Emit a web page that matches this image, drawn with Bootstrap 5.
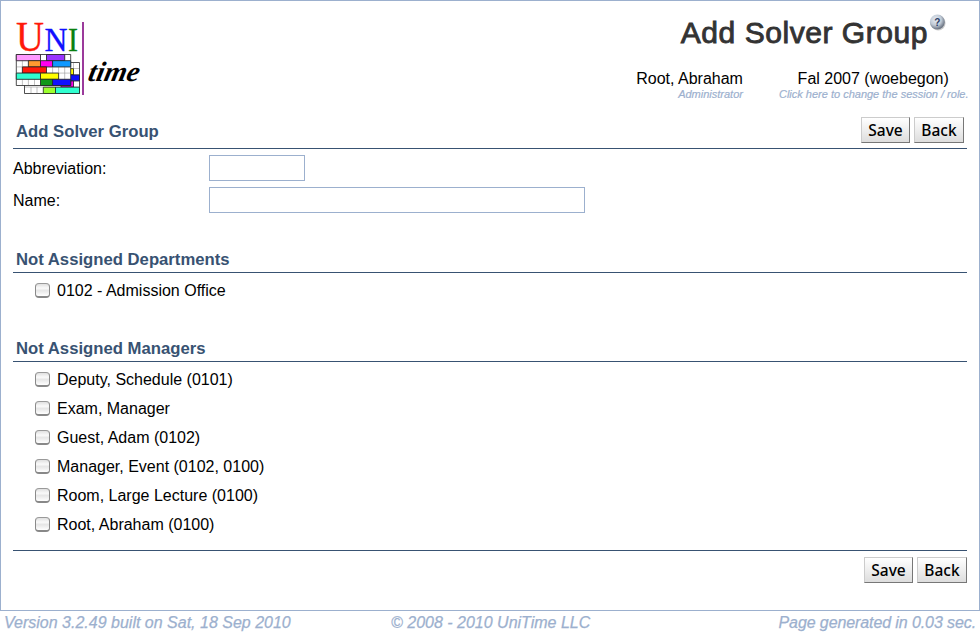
<!DOCTYPE html>
<html lang="en">
<head>
<meta charset="utf-8">
<title>Add Solver Group</title>
<link href="https://cdn.jsdelivr.net/npm/bootstrap@5.3.0/dist/css/bootstrap.min.css" rel="stylesheet">
<style>
body{font-family:"Liberation Sans",Arial,sans-serif;font-size:16px;line-height:20px;color:#000;background:#fff;height:635px;overflow:hidden}
.frame{height:611px;border:1px solid #9cb0ce;padding:0 12px}
.topbar{height:112px}
.logo{margin:11px 0 0 0;width:132px;height:88px;overflow:visible}
.page-title{font-size:30px;line-height:36px;color:#333;letter-spacing:.55px;-webkit-text-stroke:.9px #333;margin:14px 0 0}
.title-row{margin-right:21px}
.help{width:18px;height:18px;margin-top:12px}
.sub{font-size:11px;line-height:11px;font-style:italic;color:#9cb0ce;-webkit-text-stroke:.2px #9cb0ce}
.who{margin:18px -1.5px 0 0;gap:36px}
.session{padding-right:2px;margin-right:-1px}
.sec{color:#385272;font-weight:700;font-size:16.7px;line-height:20px;border-bottom:1px solid #385272;margin:0;padding-left:3px}
.sec-top{height:36px;padding-right:3px}
.sec-top .sec-name{padding-top:9px}
.btn.tool{font-family:"Noto Sans","Open Sans",sans-serif;font-size:15.5px;font-weight:500;line-height:20px;padding:2px 0 2px;height:26px;border-radius:0;color:#000;background:linear-gradient(#fff,#ddd);border:1px solid;border-color:#ccc #777 #777 #ccc;border-right-width:1.5px}
.save{width:49px}.back{width:50px}
.line{padding-top:6px}
.lab{width:196px;padding-top:2px}
.box.form-control{height:26px;border:1px solid #9cb0ce;border-radius:0;padding:0}
.short{width:96px}.long{width:376px}
.group-a{margin-top:37px}
.group-b{margin-top:34px;padding-bottom:11px;border-bottom:1px solid #385272}
.group-a .sec,.group-b .sec{margin-bottom:3px;padding-bottom:2px}
.actions{padding-top:6px}
.opt{height:29px;padding-left:22px;gap:7px}
.opt .form-check-input{width:15px;height:15px;margin:0;border:1px solid #8a8a8a;border-top-color:#999;border-bottom:2px solid #888;border-radius:4px;background:linear-gradient(#e0e0e0,#fafafa 35%,#e6e6e6 55%,#fff)}
.foot{height:24px;padding:1px 4px;font-style:italic;color:#9cb0ce;line-height:22px;-webkit-text-stroke:.25px #9cb0ce}
.foot .left{width:387px}
.foot .right{letter-spacing:-.1px}
</style>
<script src="https://cdn.jsdelivr.net/npm/bootstrap@5.3.0/dist/js/bootstrap.bundle.min.js"></script>
</head>
<body>
<main class="frame">
<header class="topbar d-flex justify-content-between">
<svg class="logo" viewBox="13 12 132 88" role="img" aria-label="UniTime">
<g font-family="Liberation Serif,serif" stroke-width=".3">
<text x="16" y="51" font-size="42" textLength="28" lengthAdjust="spacingAndGlyphs" fill="#ff1a0a" stroke="#ff1a0a">U</text>
<text x="44.5" y="51" font-size="33" textLength="23" lengthAdjust="spacingAndGlyphs" fill="#1010ff" stroke="#1010ff">N</text>
<text x="68" y="51" font-size="33" textLength="10" lengthAdjust="spacingAndGlyphs" fill="#0a8010" stroke="#0a8010">I</text></g>
<g stroke="#222" stroke-width=".8">
<path fill="#fff" d="M24.5 62.5h55v31h-55z"/>
<path stroke="#999" stroke-width=".6" d="M31 87v6M37 87v6M67.4 63v30M73.5 63v30M70 68.5h9M70 74.7h9M70 81h9M25 87h54"/>
<path fill="#ff0" d="M70 68.7h3.5v6H70z"/><path fill="#1010ff" d="M70 74.9h9.5v6H70z"/><path fill="#f0e" d="M61 81h12.5v6H61z"/>
<path fill="#9cff2e" d="M43.3 87.2h12.2v6.3H43.3z"/><path fill="#30ffd0" d="M55.5 87.2h24v6.3h-24z"/>
<path fill="#fff" d="M16.3 54.5h54.4v31H16.3z"/>
<path stroke="#999" stroke-width=".6" d="M22.4 55v30M28.4 55v30M34.5 55v30M40.5 55v30M46.5 55v30M52.6 55v30M58.6 55v30M64.7 55v30M17 60.7h53M17 66.9h53M17 73.1h53M17 79.3h53"/>
<path fill="#ff99ff" d="M16.3 54.5h24.2v6.2H16.3z"/><path fill="#9933ff" d="M46.5 54.5h18.2v6.2H46.5z"/>
<path fill="#ff9930" d="M28.4 60.7h12.1v6.2H28.4z"/><path fill="#ff00f0" d="M40.5 60.7h12.1v6.2H40.5z"/><path fill="#1099ff" d="M52.6 60.7h18.1v6.2H52.6z"/>
<path fill="#ff1a0a" d="M22.4 66.9h24.1v6.2H22.4z"/><path fill="#30ffd0" d="M16.3 73.1h24.2v6.2H16.3z"/><path fill="#ff0" d="M40.5 73.1h18.1v6.2H40.5z"/>
<path fill="#109818" d="M40.5 79.3h12.1v6.2H40.5z"/><path fill="#1010ff" d="M52.6 79.3h18.1v6.2H52.6z"/></g>
<path fill="#9b3a9b" d="M82 22h2v73h-2z"/>
<text transform="translate(87 81) skewX(-12)" font-family="Liberation Serif,serif" font-style="italic" font-weight="700" font-size="28" textLength="51" lengthAdjust="spacingAndGlyphs">time</text>
</svg>
<div class="d-flex flex-column align-items-end">
<div class="title-row d-flex"><h1 class="page-title fw-normal text-nowrap">Add Solver Group</h1>
<svg class="help" viewBox="0 0 18 18"><defs><radialGradient id="orb" cx=".4" cy=".35" r=".62"><stop stop-color="#e9eef4"/><stop offset=".6" stop-color="#c0cad6"/><stop offset="1" stop-color="#6f7886"/></radialGradient></defs><circle cx="10.2" cy="10" r="7.4" fill="#aaa" opacity=".6"/><circle cx="9.3" cy="9" r="7.5" fill="url(#orb)"/><text x="9.3" y="12.6" text-anchor="middle" font-family="Liberation Sans,sans-serif" font-size="10" font-weight="700" fill="#2c3c66">?</text></svg></div>
<div class="who d-flex"><div class="text-end">Root, Abraham<div class="sub">Administrator</div></div><div class="text-center"><div class="session">Fal 2007 (woebegon)</div><div class="sub text-nowrap">Click here to change the session / role.</div></div></div>
</div>
</header>
<section>
<div class="sec sec-top d-flex justify-content-between"><span class="sec-name">Add Solver Group</span><span class="d-flex gap-1 pt-1"><button class="btn tool save">Save</button><button class="btn tool back">Back</button></span></div>
<div class="line d-flex align-items-center"><label class="lab" for="abbv">Abbreviation:</label><input id="abbv" class="box short form-control"></div>
<div class="line d-flex align-items-center"><label class="lab" for="name">Name:</label><input id="name" class="box long form-control"></div>
</section>
<section class="group-a">
<h2 class="sec">Not Assigned Departments</h2>
<label class="opt d-flex align-items-center"><input type="checkbox" class="form-check-input">0102 - Admission Office</label>
</section>
<section class="group-b">
<h2 class="sec">Not Assigned Managers</h2>
<label class="opt d-flex align-items-center"><input type="checkbox" class="form-check-input">Deputy, Schedule (0101)</label>
<label class="opt d-flex align-items-center"><input type="checkbox" class="form-check-input">Exam, Manager</label>
<label class="opt d-flex align-items-center"><input type="checkbox" class="form-check-input">Guest, Adam (0102)</label>
<label class="opt d-flex align-items-center"><input type="checkbox" class="form-check-input">Manager, Event (0102, 0100)</label>
<label class="opt d-flex align-items-center"><input type="checkbox" class="form-check-input">Room, Large Lecture (0100)</label>
<label class="opt d-flex align-items-center"><input type="checkbox" class="form-check-input">Root, Abraham (0100)</label>
</section>
<div class="actions d-flex justify-content-end gap-1"><button class="btn tool save">Save</button><button class="btn tool back">Back</button></div>
</main>
<footer class="foot d-flex"><span class="left">Version 3.2.49 built on Sat, 18 Sep 2010</span><span>© 2008 - 2010 UniTime LLC</span><span class="right ms-auto">Page generated in 0.03 sec.</span></footer>
</body>
</html>
